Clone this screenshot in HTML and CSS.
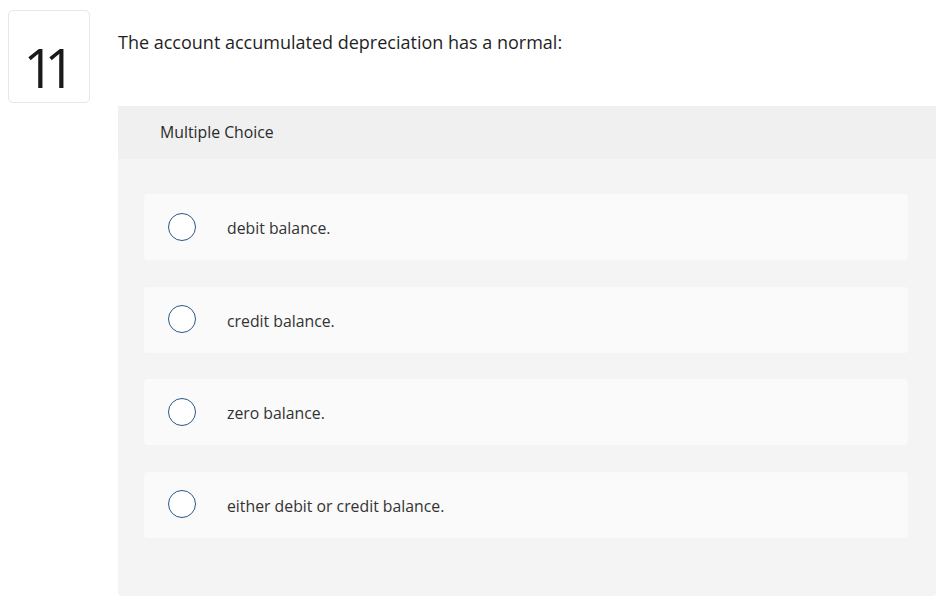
FILE: index.html
```html
<!DOCTYPE html>
<html>
<head>
<meta charset="utf-8">
<link rel="stylesheet" href="styles.css">
</head>
<body>
<div class="page">
  <div class="num">11</div>
  <div class="main">
    <p class="question">The account accumulated depreciation has a normal:</p>
    <div class="panel">
      <div class="panel-head">Multiple Choice</div>
      <div class="panel-body">
        <div class="option"><span class="radio"></span><span class="label">debit balance.</span></div>
        <div class="option"><span class="radio"></span><span class="label">credit balance.</span></div>
        <div class="option"><span class="radio"></span><span class="label">zero balance.</span></div>
        <div class="option"><span class="radio"></span><span class="label">either debit or credit balance.</span></div>
      </div>
    </div>
  </div>
</div>
</body>
</html>
```
FILE: styles.css
```css
html, body {
  margin: 0;
  padding: 0;
  background: #fff;
}
body {
  font-family: "Open Sans", "Lato", sans-serif;
  color: #1c1c1c;
}
.page {
  display: flex;
  align-items: flex-start;
  padding: 10px 2px 0 8px;
  gap: 28px;
}
.num {
  box-sizing: border-box;
  width: 82px;
  height: 93px;
  border: 1px solid #e6e6e6;
  border-radius: 5px;
  display: flex;
  align-items: center;
  justify-content: center;
  padding-top: 20px;
  padding-right: 9px;
  font-size: 54px;
  font-weight: 500;
  line-height: 1;
  letter-spacing: -10px;
  color: #1a1a1a;
  flex-shrink: 0;
}
.main {
  flex: 1;
}
.question {
  margin: 0;
  padding-top: 20px;
  font-size: 18px;
  line-height: 24px;
  color: #1f1f1f;
}
.panel {
  margin-top: 52px;
  background: #f4f4f4;
  border-radius: 0 0 4px 4px;
  height: 490px;
}
.panel-head {
  background: #f0f0f0;
  height: 53px;
  box-sizing: border-box;
  padding: 16px 0 0 42px;
  font-size: 15.8px;
  line-height: 20px;
  color: #2a2a2a;
}
.panel-body {
  display: flex;
  flex-direction: column;
  gap: 26.5px;
  padding: 35px 28px 0 26px;
}
.option {
  background: #fafafa;
  border-radius: 4px;
  height: 66px;
  display: flex;
  align-items: center;
  padding-left: 24px;
}
.radio {
  box-sizing: border-box;
  width: 28px;
  height: 28px;
  border: 1.3px solid #2a5788;
  border-radius: 50%;
  background: #fff;
  flex-shrink: 0;
  margin-top: -1px;
}
.label {
  margin-left: 31px;
  padding-top: 2px;
  font-size: 15.8px;
  color: #333;
}
```
